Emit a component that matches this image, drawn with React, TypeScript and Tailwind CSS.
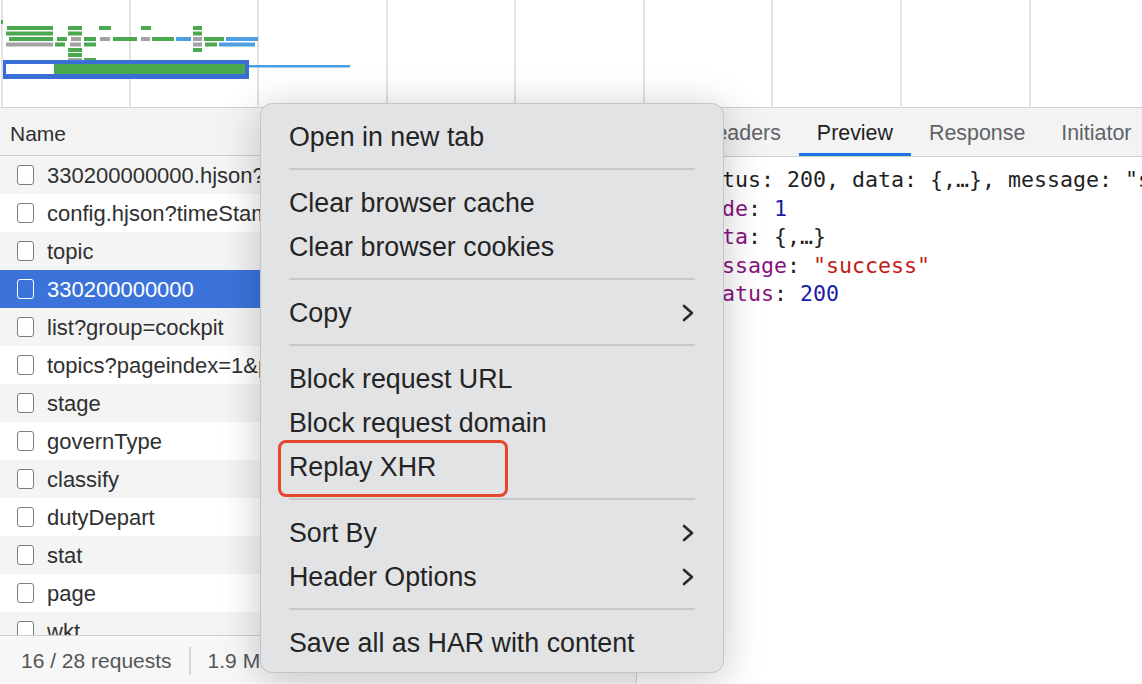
import React from "react";

const requests = [
  "330200000000.hjson?timeStamp=1642",
  "config.hjson?timeStamp=1642",
  "topic",
  "330200000000",
  "list?group=cockpit",
  "topics?pageindex=1&pagesize=10",
  "stage",
  "governType",
  "classify",
  "dutyDepart",
  "stat",
  "page",
  "wkt",
];

const SELECTED = 3;

// overview bars: [x1, x2, y, h, color]
const G = "#4aa94f";
const GR = "#a3a3a3";
const B = "#4c9ee3";
const bars: [number, number, number, number, string][] = [
  [1, 3, 20, 4, G],
  [7, 53, 26, 4, G],
  [68, 82, 26, 4, G],
  [99, 111, 26, 4, G],
  [141, 151, 26, 4, G],
  [193, 202, 26, 4, G],
  [6, 53, 31.5, 4, G],
  [68, 82, 31.5, 4, G],
  [193, 202, 31.5, 4, G],
  [9, 53, 37, 4, G],
  [57, 67, 37, 4, G],
  [71, 81, 37, 4, GR],
  [84, 96, 37, 4, G],
  [100, 110, 37, 4, GR],
  [113, 137, 37, 4, G],
  [141, 150, 37, 4, GR],
  [152, 174, 37, 4, G],
  [176, 191, 37, 4, B],
  [193, 202, 37, 4, GR],
  [204, 224, 37, 4, G],
  [226, 258, 37, 4, B],
  [6, 53, 42.5, 4, GR],
  [55, 65, 42.5, 4, G],
  [70, 81, 42.5, 4, GR],
  [84, 96, 42.5, 4, G],
  [193, 202, 42.5, 4, GR],
  [205, 217, 42.5, 4, G],
  [219, 255, 42.5, 4, B],
  [68, 82, 48, 4, G],
  [193, 202, 48, 4, G],
  [68, 82, 53, 4, G],
  [68, 82, 58, 3, GR],
  [84, 96, 58, 3, G],
];

function Overview() {
  const grid = [1, 129, 257, 386, 514, 643, 771, 900, 1029];
  return (
    <div className="h-[108px] border-b border-[#cfcfcf] bg-white">
      <svg width="1142" height="108" className="block">
        {grid.map((x) => (
          <rect key={x} x={x} y={0} width={2} height={108} fill="#e2e2e2" />
        ))}
        {bars.map(([x1, x2, y, h, c], i) => (
          <rect key={i} x={x1} y={y} width={x2 - x1} height={h} fill={c} />
        ))}
        <rect x={249} y={65} width={101} height={2.5} fill="#4c9ee3" />
        <rect x={3} y={60} width={246} height={19} fill="#3a6fd8" />
        <rect x={6} y={64} width={48} height={10} fill="#ffffff" />
        <rect x={54} y={64} width={191} height={10} fill={G} />
      </svg>
    </div>
  );
}

function Checkbox({ light }: { light?: boolean }) {
  return (
    <span
      className={`inline-block h-[20px] w-[17px] shrink-0 rounded-[3px] border-[1.5px] ${
        light ? "border-white" : "border-[#7d7d7d] bg-white"
      }`}
    />
  );
}

function RequestList() {
  return (
    <div className="flex w-[637px] flex-col border-r border-[#d0d0d0]">
      <div className="flex h-[48px] items-center border-b border-[#cfcfcf] bg-[#f3f3f3] pl-[10px] pt-[4px] text-[21px] text-[#303030]">
        Name
      </div>
      <div className="flex-1 overflow-hidden">
        {requests.map((name, i) => {
          const selected = i === SELECTED;
          const bg = selected
            ? "bg-[#3b73da] text-white"
            : i % 2 === 0
              ? "bg-[#f4f4f4] text-[#303030]"
              : "bg-white text-[#303030]";
          return (
            <div
              key={name}
              className={`flex h-[38px] items-center gap-[13px] whitespace-nowrap pl-[17px] text-[22px] ${bg}`}
            >
              <Checkbox light={selected} />
              <span>{name}</span>
            </div>
          );
        })}
      </div>
      <div className="flex h-[48px] items-center border-t border-[#cfcfcf] bg-[#f7f7f7] pl-[21px] pt-[2px] text-[21px] text-[#555]">
        <span>16 / 28 requests</span>
        <span className="mx-[17px] h-[28px] w-[2px] bg-[#d4d4d4]" />
        <span>1.9 MB transferred</span>
      </div>
    </div>
  );
}

const tabs = ["Headers", "Preview", "Response", "Initiator", "Timing"];

function Preview() {
  return (
    <div className="flex min-w-0 flex-1 flex-col bg-white">
      <div className="flex h-[49px] items-stretch border-b border-[#cfcfcf] bg-[#f3f3f3]">
        <div className="flex w-[45px] shrink-0 items-center justify-center text-[#5f6368]">
          <svg width="14" height="14" viewBox="0 0 14 14">
            <path d="M2 2 L12 12 M12 2 L2 12" stroke="currentColor" strokeWidth="2" />
          </svg>
        </div>
        {tabs.map((t) => (
          <div
            key={t}
            className={`flex items-center whitespace-nowrap border-b-[3px] px-[18px] pt-[5px] text-[21.4px] ${
              t === "Preview"
                ? "border-[#1a73e8] text-[#1f1f1f]"
                : "border-transparent text-[#5f6368]"
            }`}
          >
            {t}
          </div>
        ))}
      </div>
      <div className="whitespace-nowrap pt-[9px] font-['DejaVu_Sans_Mono',monospace] text-[21.6px] leading-[28.5px] text-[#1f1f1f]">
        <div className="flex h-[28.5px] items-center pl-[12px]">
          <span className="w-[21px] shrink-0 text-[12px] leading-none text-[#6e6e6e]">▼</span>
          <span>{"{status: 200, data: {,…}, message: \"success\"}"}</span>
        </div>
        <div className="pl-[59px]">
          <span className="text-[#881280]">code</span>: <span className="text-[#1a1aa6]">1</span>
        </div>
        <div className="pl-[59px]">
          <span className="text-[#881280]">data</span>: {"{,…}"}
        </div>
        <div className="pl-[59px]">
          <span className="text-[#881280]">message</span>:{" "}
          <span className="text-[#c41a16]">"success"</span>
        </div>
        <div className="pl-[59px]">
          <span className="text-[#881280]">status</span>: <span className="text-[#1a1aa6]">200</span>
        </div>
      </div>
    </div>
  );
}

function Chevron() {
  return (
    <svg width="12" height="18" viewBox="0 0 12 18" className="shrink-0">
      <polyline
        points="2,2 10,9 2,16"
        fill="none"
        stroke="#2a2a2a"
        strokeWidth="2.6"
        strokeLinecap="round"
        strokeLinejoin="round"
      />
    </svg>
  );
}

function Item({ label, sub, marked }: { label: string; sub?: boolean; marked?: boolean }) {
  return (
    <div className="relative flex h-[44px] items-center justify-between pl-[28px] pr-[29px]">
      <span>{label}</span>
      {sub && <Chevron />}
      {marked && (
        <span className="absolute left-[17px] top-[-5px] h-[57px] w-[230px] rounded-[8px] border-[3px] border-[#e6452d]" />
      )}
    </div>
  );
}

function Sep() {
  return <div className="mx-[28px] mb-[11px] mt-[9px] h-[2px] bg-[#c8c9cb]" />;
}

function ContextMenu() {
  return (
    <div className="absolute left-[260px] top-[103px] h-[570px] w-[464px] rounded-[12px] border border-[#c4c5c7] bg-[#e2e3e5] pt-[11px] text-[26.8px] text-[#242424] shadow-[0_6px_40px_rgba(0,0,0,0.22)]">
      <Item label="Open in new tab" />
      <Sep />
      <Item label="Clear browser cache" />
      <Item label="Clear browser cookies" />
      <Sep />
      <Item label="Copy" sub />
      <Sep />
      <Item label="Block request URL" />
      <Item label="Block request domain" />
      <Item label="Replay XHR" marked />
      <Sep />
      <Item label="Sort By" sub />
      <Item label="Header Options" sub />
      <Sep />
      <Item label="Save all as HAR with content" />
    </div>
  );
}

export default function App() {
  return (
    <div className="relative h-[684px] w-[1142px] overflow-hidden bg-white font-['Liberation_Sans',Arial,sans-serif]">
      <Overview />
      <div className="flex h-[575px]">
        <RequestList />
        <Preview />
      </div>
      <ContextMenu />
    </div>
  );
}
